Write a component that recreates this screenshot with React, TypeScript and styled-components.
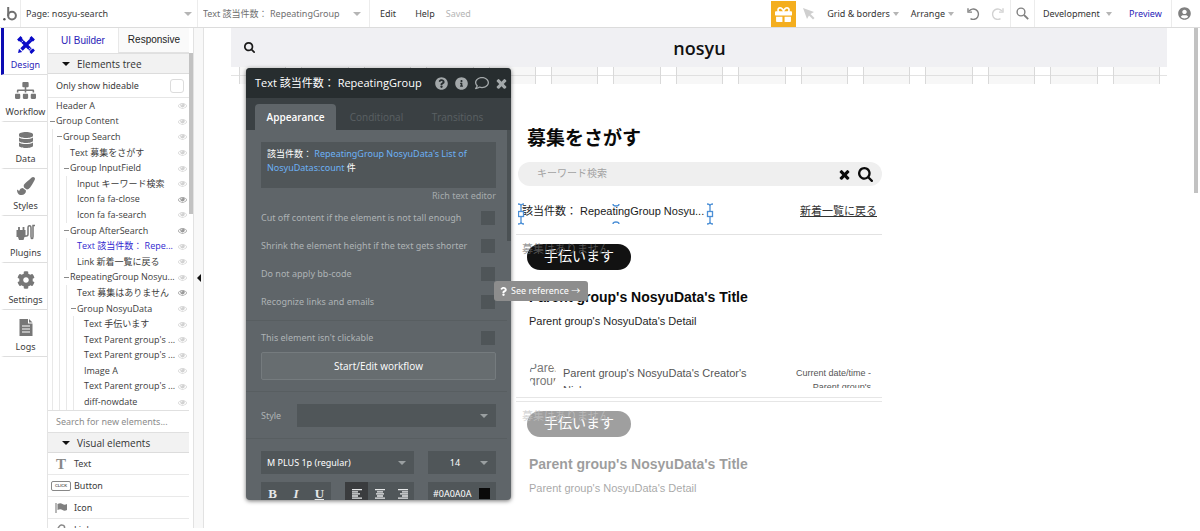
import React from "react";
import styled, { createGlobalStyle, css } from "styled-components";
import {
  FaGift,
  FaSitemap,
  FaDatabase,
  FaPaintBrush,
  FaCog,
  FaQuestionCircle,
  FaInfoCircle,
  FaRegComment,
  FaUserCircle,
  FaQuestion,
} from "react-icons/fa";

const ui = `"Noto Sans", "Open Sans", "Noto Sans CJK JP", sans-serif`;
const tight = `"Open Sans", "Noto Sans CJK JP", sans-serif`;
const arial = `"Liberation Sans", "Noto Sans CJK JP", sans-serif`;

const GlobalStyle = createGlobalStyle`
  *, *::before, *::after { box-sizing: border-box; }
  body { margin: 0; background: #fff; color: #3c3c3c; font: 9px/14px ${ui}; }
  button, input, select { font: inherit; color: inherit; margin: 0; padding: 0; border: 0; background: none; border-radius: 0; }
  button { cursor: pointer; }
  a { color: inherit; text-decoration: none; }
  svg { display: block; flex: none; }
`;

/* ---------- shell ---------- */

const Shell = styled.div`
  display: flex;
  flex-direction: column;
  height: 100vh;
  padding-bottom: 3px;
  overflow: hidden;
`;

const Workspace = styled.div`
  display: flex;
  flex: 1;
  min-height: 0;
`;

/* ---------- top bar ---------- */

const TopBar = styled.header`
  display: flex;
  align-items: stretch;
  height: 28px;
  border-bottom: 1px solid #dcdcdc;
  background: #fff;
`;

const BarCell = styled.div<{ $w?: number; $divided?: boolean }>`
  display: flex;
  align-items: center;
  width: ${(p) => (p.$w ? `${p.$w}px` : "auto")};
  ${(p) => p.$divided && "border-right: 1px solid #ececec;"}
`;

const Menus = styled.div`
  display: flex;
  gap: 7px;
  padding-left: 4px;
`;

const BarButton = styled.button<{ $accent?: boolean }>`
  display: flex;
  align-items: center;
  gap: 3px;
  padding: 0 6px;
  color: ${(p) => (p.$accent ? "#2a23b8" : "#333")};
`;

const VersionButton = styled(BarButton)`
  gap: 6px;
  width: 88px;
  padding: 0 8px;
`;

const IconButton = styled.button<{ $tone?: string }>`
  display: flex;
  align-items: center;
  justify-content: center;
  width: 25px;
  height: 27px;
  color: ${(p) => p.$tone ?? "#808080"};
`;

const GiftButton = styled(IconButton)`
  height: 26px;
  margin-top: 1px;
  background: #f4ae1e;
  color: #fff;
`;

const Saved = styled.span`
  align-self: center;
  padding-left: 5px;
  color: #b4b4b4;
`;

const Spacer = styled.div`
  flex: 1;
`;

const SelectWrap = styled.div<{ $arrow: string; $inset: number }>`
  position: relative;
  display: flex;
  flex: 1;
  align-self: stretch;
  min-width: 0;

  &::after {
    content: "";
    position: absolute;
    top: calc(50% - 2px);
    right: ${(p) => p.$inset}px;
    border: 4px solid transparent;
    border-top-color: ${(p) => p.$arrow};
    border-bottom: 0;
    pointer-events: none;
  }
`;

const BarSelect = styled.select<{ $muted?: boolean }>`
  appearance: none;
  width: 100%;
  padding: 0 16px 0 5px;
  color: ${(p) => (p.$muted ? "#6f6f6f" : "#3a3a3a")};
`;

const Caret = styled.span`
  border: 3px solid transparent;
  border-top: 4px solid #b5b5b5;
  border-bottom: 0;
`;

/* ---------- navigation rail ---------- */

const Rail = styled.nav`
  display: flex;
  flex-direction: column;
  flex: none;
  width: 48px;
  border-right: 1px solid #e4e4e4;
`;

const RailItem = styled.button<{ $active?: boolean }>`
  display: flex;
  flex-direction: column;
  align-items: center;
  justify-content: flex-end;
  gap: 4px;
  height: 47px;
  margin: 0 0 0 1px;
  padding: 0 0 2px;
  border-bottom: 1px solid #dedede;
  border-left: 3px solid ${(p) => (p.$active ? "#0c0cb4" : "transparent")};
  color: ${(p) => (p.$active ? "#2a23b8" : "#3c3c3c")};
  white-space: nowrap;

  svg {
    color: ${(p) => (p.$active ? "#0a0ac8" : "#777")};
  }
`;

/* ---------- side panel ---------- */

const Panel = styled.aside`
  display: flex;
  flex-direction: column;
  flex: none;
  width: 141px;
`;

const Tabs = styled.div`
  display: flex;
  flex: none;
  height: 25px;
`;

const Tab = styled.button<{ $active?: boolean }>`
  flex: 1;
  font: 10px/14px ${arial};
  ${(p) =>
    p.$active
      ? css`
          color: #2a23b8;
        `
      : css`
          border-bottom: 1px solid #e2e2e2;
          border-left: 1px solid #e8e8e8;
          background: #fafafa;
          color: #222;
        `}
`;

const SectionHeader = styled.button`
  display: flex;
  align-items: center;
  flex: none;
  gap: 7px;
  height: 21px;
  padding-left: 14px;
  border-top: 1px solid #e0e0e0;
  border-bottom: 1px solid #dcdcdc;
  background: #f2f2f2;
  font: 10px/14px ${tight};
  color: #333;

  &::before {
    content: "";
    border: 4px solid transparent;
    border-top: 4px solid #111;
    border-bottom: 0;
  }
`;

const HideableRow = styled.label`
  display: flex;
  align-items: center;
  justify-content: space-between;
  flex: none;
  height: 24px;
  padding: 0 5px 0 8px;
  border-bottom: 1px solid #e6e6e6;
`;

const LightCheck = styled.input`
  appearance: none;
  width: 14px;
  height: 14px;
  border: 1px solid #dcdcdc;
  border-radius: 3px;
  background: #fff;
`;

const Tree = styled.ul`
  display: flex;
  flex: 1;
  flex-direction: column;
  min-height: 0;
  margin: 0;
  padding: 0 1px;
  list-style: none;
  font-family: ${tight};
`;

const TreeRow = styled.li<{ $selected?: boolean }>`
  display: flex;
  flex: 1;
  align-items: center;
  min-height: 0;
  color: ${(p) => (p.$selected ? "#3129cf" : "#3c3c3c")};
`;

const Guide = styled.span`
  flex: none;
  align-self: stretch;
  width: 7px;
  background: linear-gradient(#e8e8e8, #e8e8e8) 3px 0 / 1px 100% no-repeat;
`;

const Twist = styled.span<{ $open?: boolean }>`
  flex: none;
  width: 5px;
  height: 1px;
  margin: 0 1px;
  background: ${(p) => (p.$open ? "#8a8a8a" : "transparent")};
`;

const TreeLabel = styled.span`
  flex: 1;
  min-width: 0;
  white-space: nowrap;
`;

const EyeButton = styled.button<{ $on?: boolean }>`
  padding-right: 1px;
  color: ${(p) => (p.$on ? "#9a9a9a" : "#d2d2d2")};
`;

const ElementSearch = styled.input`
  flex: none;
  height: 22px;
  padding-left: 8px;
  border-top: 1px solid #e0e0e0;

  &::placeholder {
    color: #8c8c8c;
    opacity: 1;
  }
`;

const Palette = styled.div`
  flex: none;
  height: 75px;
  overflow: hidden;
`;

const PaletteItem = styled.button`
  display: flex;
  align-items: center;
  gap: 3px;
  width: 100%;
  height: 22px;
  padding-left: 3px;
  border-bottom: 1px solid #e9e9e9;

  > svg,
  > span:first-child {
    width: 20px;
  }
`;

const BigT = styled.span`
  font: bold 15px/16px "Liberation Serif", serif;
  color: #888;
  text-align: center;
`;

const ClickChip = styled.span`
  height: 10px;
  border: 1px solid #888;
  border-radius: 2px;
  font: bold 4px/8px ${arial};
  color: #666;
  text-align: center;
`;

const ScrollTrack = styled.div<{ $top?: number }>`
  flex: none;
  width: 4px;
  padding-top: ${(p) => p.$top ?? 0}px;
`;

const ScrollThumb = styled.div<{ $h: number; $tone?: string }>`
  height: ${(p) => p.$h}px;
  background: ${(p) => p.$tone ?? "#c2c2c2"};
`;

const Gutter = styled.div`
  flex: none;
  width: 2px;
`;

const Collapser = styled.button`
  display: flex;
  align-items: center;
  justify-content: center;
  flex: none;
  width: 11px;
  border-left: 1px solid #e2e2e2;
  border-right: 1px solid #e2e2e2;
  background: #f8f8f8;

  &::before {
    content: "";
    border: 4px solid transparent;
    border-right: 4px solid #111;
    border-left: 0;
  }
`;

/* ---------- canvas ---------- */

const Canvas = styled.main`
  position: relative;
  flex: 1;
  min-width: 0;
  padding: 0 27px;
  overflow: hidden;
  font-family: ${arial};
  color: #1a1a1a;
`;

const SiteHeader = styled.div`
  display: grid;
  grid-template-columns: 1fr auto 1fr;
  align-items: center;
  height: 39px;
  padding: 0 12px 0 13px;
  background: #f0f0f3;
`;

const SiteLogo = styled.div`
  font: 600 18px/22px ${tight};
  color: #111;
`;

const GridStrip = styled.div`
  display: grid;
  grid-template-columns: repeat(15, 1fr);
  gap: 15px;
  height: 17px;
  padding: 0 7px 0 8px;
  background: linear-gradient(#e3e3e3, #e3e3e3) 0 8px / 100% 1px no-repeat;
`;

const GridColumn = styled.div`
  border: solid #d9d9d9;
  border-width: 0 1px;
  background: linear-gradient(#e0e0e0, #e0e0e0) 0 8px / 100% 1px no-repeat #f7f7f7;
`;

const Page = styled.div`
  max-width: 366px;
  margin: 0 auto;
`;

const PageTitle = styled.h1`
  margin: 40px 0 9px 11px;
  font-size: 19px;
  line-height: 29px;
  font-weight: 700;
  color: #0a0a0a;
`;

const SearchBar = styled.div`
  display: flex;
  align-items: center;
  gap: 8px;
  height: 24px;
  margin-left: 2px;
  padding: 0 9px 0 19px;
  border-radius: 12px;
  background: #efefef;
  color: #0a0a0a;

  input {
    flex: 1;
    min-width: 0;
    font-size: 10px;
  }
  input::placeholder {
    color: #a3a3a3;
    opacity: 1;
  }
`;

const ResultRow = styled.div`
  display: flex;
  align-items: center;
  justify-content: space-between;
  height: 49px;
  padding: 2px 5px 0 6px;
  border-bottom: 1px solid #e2e2e2;
  font-size: 11px;
  line-height: 16px;

  a {
    text-decoration: underline;
    color: #333;
  }
`;

const SelectedText = styled.div`
  position: relative;
  width: 190px;
  white-space: nowrap;

  svg {
    position: absolute;
    top: 0;
    left: -4px;
  }
`;

const Card = styled.article<{ $ghost?: boolean }>`
  position: relative;
  padding: 9px 11px 9px;
  opacity: ${(p) => (p.$ghost ? 0.4 : 1)};
`;

const CardSeparator = styled.div`
  height: 5px;
  border: solid #e6e6e6;
  border-width: 1px 0;
`;

const Pill = styled.div`
  width: 104px;
  height: 26px;
  border-radius: 13px;
  background: #121212;
  font-size: 14px;
  line-height: 25px;
  color: #fff;
  text-align: center;
`;

const EmptyNote = styled.div`
  position: absolute;
  top: 6px;
  left: 6px;
  font-size: 11px;
  line-height: 16px;
  color: rgba(110, 110, 110, 0.7);
`;

const CardTitle = styled.h2`
  margin: 18px 0 0 2px;
  font-size: 14px;
  line-height: 18px;
  color: #0a0a0a;
`;

const CardDetail = styled.p`
  margin: 7px 0 33px 2px;
  font-size: 11px;
  line-height: 16px;
  color: #1f1f1f;
`;

const CardFooter = styled.div`
  display: flex;
  height: 26px;
  margin-left: 2px;
  overflow: hidden;
  color: #555;
`;

const Avatar = styled.div`
  width: 27px;
  height: 26px;
  border-radius: 13px;
  overflow: hidden;
  font-size: 12px;
  line-height: 13px;
  color: #777;
`;

const Creator = styled.div`
  width: 190px;
  height: 23px;
  margin: 3px 0 0 7px;
  overflow: hidden;
  font-size: 11px;
  line-height: 17px;
`;

const DateNote = styled.div`
  flex: 1;
  height: 22px;
  margin: 4px 0 0 30px;
  overflow: hidden;
  font-size: 9px;
  line-height: 14px;
  text-align: right;
`;

/* ---------- property editor ---------- */

const Editor = styled.section`
  position: absolute;
  top: 40px;
  left: 42px;
  display: flex;
  flex-direction: column;
  width: 265px;
  height: 432px;
  border-radius: 4px;
  overflow: hidden;
  background: #5f6569;
  box-shadow: 0 1px 4px rgba(0, 0, 0, 0.55);
  font-family: ${ui};
  color: #fff;
`;

const EditorHeader = styled.div`
  display: flex;
  align-items: center;
  flex: none;
  gap: 7px;
  height: 30px;
  padding: 0 4px 0 9px;
  background: #272d2f;

  h3 {
    flex: 1;
    min-width: 0;
    margin: 0;
    font: 11px/16px ${tight};
    white-space: nowrap;
  }
  button {
    color: #a3a8aa;
  }
`;

const EditorTabs = styled.div`
  display: flex;
  align-items: flex-end;
  flex: none;
  height: 32px;
  padding-left: 9px;
  background: #3a4043;
`;

const EditorTab = styled.button<{ $active?: boolean }>`
  width: 81px;
  height: 26px;
  border-radius: 4px 4px 0 0;
  font: 10px/14px ${tight};
  color: #5a6063;
  ${(p) =>
    p.$active &&
    css`
      background: #5f6569;
      font-weight: 600;
      color: #fff;
    `}
`;

const EditorBody = styled.div`
  display: flex;
  flex: 1;
  min-height: 0;
`;

const Fields = styled.div`
  flex: 1;
  min-width: 0;
`;

const FieldGroup = styled.div<{ $compact?: boolean }>`
  padding: ${(p) => (p.$compact ? "10px 11px 11px 15px" : "12px 11px 11px 15px")};
  border-bottom: 1px solid #585e61;
`;

const Expression = styled.div`
  height: 46px;
  padding: 5px 6px;
  background: #505659;
  line-height: 14px;

  span {
    color: #6cb1f5;
  }
`;

const RichLink = styled.a`
  display: block;
  height: 16px;
  margin-bottom: 7px;
  line-height: 15px;
  text-align: right;
  color: #a6abad;
`;

const CheckRow = styled.label`
  display: flex;
  align-items: center;
  justify-content: space-between;
  height: 14px;
  padding-right: 1px;
  color: #aeb3b5;
  white-space: nowrap;

  & + & {
    margin-top: 14px;
  }
`;

const DarkCheck = styled.input`
  appearance: none;
  width: 14px;
  height: 14px;
  background: #4f5558;
`;

const WorkflowButton = styled.button`
  width: 100%;
  height: 28px;
  margin-top: 7px;
  border: 1px solid #757b7e;
  border-radius: 2px;
  background: #676d70;
  font: 10px/14px ${tight};
  color: #fff;
`;

const FieldRow = styled.div`
  display: flex;
  align-items: center;
  height: 23px;
  color: #aeb3b5;

  & + & {
    margin-top: 8px;
  }
`;

const StyleCaption = styled.span`
  width: 36px;
`;

const DarkSelect = styled.select<{ $centered?: boolean }>`
  appearance: none;
  width: 100%;
  padding: 0 ${(p) => (p.$centered ? 20 : 6)}px 0 6px;
  background: #505659;
  color: #fff;
  text-align: ${(p) => (p.$centered ? "center" : "left")};
`;

const Cluster = styled.div<{ $w: number }>`
  display: flex;
  flex: none;
  width: ${(p) => p.$w}px;
  height: 23px;
  margin-right: 14px;
  background: #505659;

  &:last-child {
    flex: 1;
    margin-right: 0;
  }
`;

const FormatButton = styled.button<{ $on?: boolean }>`
  display: flex;
  align-items: center;
  justify-content: center;
  flex: 1;
  background: ${(p) => (p.$on ? "#3a3c3e" : "transparent")};
  font: bold 13px/16px "Liberation Serif", serif;
  color: #e6e8e9;
`;

const ColorField = styled.input`
  width: 46px;
  padding-left: 5px;
  color: #fff;
`;

const Swatch = styled.button`
  width: 11px;
  height: 11px;
  margin: 6px 0 0 5px;
  background: #0a0a0a;
`;

const Reference = styled.a`
  position: absolute;
  top: 253px;
  left: 290px;
  display: flex;
  align-items: center;
  gap: 3px;
  height: 20px;
  padding: 0 8px 0 5px;
  border-radius: 3px;
  background: #8d8d8d;
  font: 9px/14px ${ui};
  color: #fff;
  white-space: nowrap;
`;

/* ---------- icons ---------- */

type IconProps = { size: number };

const CloseIcon = ({ size }: IconProps) => (
  <svg width={size} height={size} viewBox="230 240 1330 1330" fill="currentColor">
    <path d="M1490 1322q0 40-28 68l-136 136q-28 28-68 28t-68-28l-294-294-294 294q-28 28-68 28t-68-28l-136-136q-28-28-28-68t28-68l294-294-294-294q-28-28-28-68t28-68l136-136q28-28 68-28t68 28l294 294 294-294q28-28 68-28t68 28l136 136q28 28 28 68t-28 68l-294 294 294 294q28 28 28 68z" />
  </svg>
);

const SearchIcon = ({ size }: IconProps) => (
  <svg width={size} height={size} viewBox="64 128 1664 1664" fill="currentColor">
    <path d="M1216 832q0-185-131.5-316.5t-316.5-131.5-316.5 131.5-131.5 316.5 131.5 316.5 316.5 131.5 316.5-131.5 131.5-316.5zm512 832q0 52-38 90t-90 38q-54 0-90-38l-343-342q-179 124-399 124-143 0-273.5-55.5t-225-150-150-225-55.5-273.5 55.5-273.5 150-225 225-150 273.5-55.5 273.5 55.5 225 150 150 225 55.5 273.5q0 220-124 399l343 343q37 37 37 90z" />
  </svg>
);

const ThinSearchIcon = () => (
  <svg width="13" height="13" viewBox="0 0 13 13" fill="none" stroke="currentColor">
    <circle cx="5" cy="5" r="3.9" strokeWidth="1.4" />
    <path d="M8 8l4.2 4.2" strokeWidth="1.8" />
  </svg>
);

const EyeIcon = () => (
  <svg width="9" height="9" viewBox="0 0 1792 1792" fill="currentColor">
    <path d="M1664 960q-152-236-381-353 61 104 61 225 0 185-131.5 316.5t-316.5 131.5-316.5-131.5-131.5-316.5q0-121 61-225-229 117-381 353 133 205 333.5 326.5t434.5 121.5 434.5-121.5 333.5-326.5zm-720-384q0-20-14-34t-34-14q-125 0-214.5 89.5t-89.5 214.5q0 20 14 34t34 14 34-14 14-34q0-86 61-147t147-61q20 0 34-14t14-34zm848 384q0 34-20 69-140 230-376.5 368.5t-499.5 138.5-499.5-139-376.5-368q-20-35-20-69t20-69q140-229 376.5-368t499.5-139 499.5 139 376.5 368q20 35 20 69z" />
  </svg>
);

const BrandMark = () => (
  <svg width="20" height="27" viewBox="0 0 20 27" fill="none">
    <circle cx="4.4" cy="19.2" r="1.2" fill="#555" />
    <circle cx="12" cy="15.6" r="3.9" stroke="#707070" strokeWidth="2" />
    <path d="M8.2 7v9" stroke="#707070" strokeWidth="2" />
  </svg>
);

const TurnIcon = ({ flip }: { flip?: boolean }) => (
  <svg width="14" height="14" viewBox="0 0 14 14" fill="none" stroke="currentColor" strokeWidth="1.4">
    <g transform={flip ? "matrix(-1 0 0 1 14 0)" : undefined}>
      <path d="M4.5 11.6A5.2 5.2 0 1 0 3 4.2" />
      <path d="M2 1.2v3.9h4" />
    </g>
  </svg>
);

const DesignIcon = () => (
  <svg width="18" height="18" viewBox="0 0 18 18" fill="none" stroke="currentColor">
    <path d="M4.5 4.5L13.5 13.5" strokeWidth="3.4" />
    <path d="M13.5 4.5L4.5 13.5" strokeWidth="3.4" />
    <path d="M1 4.5L4.5 1M13.5 1L17 4.5M13.5 17L17 13.5" strokeWidth="2.6" />
    <path d="M2.6 2.6l2 2M15.4 2.6l-2 2M14 14l1.6 1.6" strokeWidth="3.8" />
    <path d="M1 17l1-4.2L5.2 16z" fill="currentColor" stroke="none" />
    <path d="M6.3 4.6l-2 2M13.6 11.6l-2 2" strokeWidth="0.8" stroke="#fff" />
  </svg>
);

const PlugIcon = () => (
  <svg width="19" height="18" viewBox="0 0 19 18" fill="none" stroke="currentColor">
    <path d="M0.5 6h9v7H8.5L7.5 16H3L2 13H0.500z" fill="currentColor" stroke="none" />
    <path d="M3 3v4M7.5 3v4" strokeWidth="1.8" />
    <path d="M9 12h1.5q1.500 0 1.500-2V4q0-2.200 1.500-2.200T15 4v8.500q0 2 1 2t1-2V1.500h2" strokeWidth="1.5" />
  </svg>
);

const LogIcon = () => (
  <svg width="14" height="17" viewBox="0 0 14 17">
    <path d="M0.5 0h8.500v4.500h4.500V17H0.500z" fill="currentColor" />
    <path d="M10 0l3.500 3.500H10z" fill="currentColor" />
    <path d="M3 7h8M3 10h8M3 13h8" stroke="#fff" strokeWidth="1.2" />
  </svg>
);

const FlagIcon = () => (
  <svg width="20" height="10" viewBox="0 0 20 10">
    <path d="M5 0v10" stroke="#888" strokeWidth="1.2" />
    <path d="M6.5 1q3-1.500 5 0t4.500 0v6q-2.500 1.500-4.500 0t-5 0z" fill="#808080" />
  </svg>
);

const LinkIcon = () => (
  <svg width="20" height="14" viewBox="0 0 20 14" fill="none" stroke="#888" strokeWidth="1.5">
    <path d="M8 8l-1.500-1.500q2-5 4.500-4.500 3 .5 2.500 3L11 9" />
  </svg>
);

const alignOffsets = { left: [0, 0], center: [1, 2], right: [2, 4] };

const AlignIcon = ({ side }: { side: keyof typeof alignOffsets }) => {
  const [mid, short] = alignOffsets[side];
  return (
    <svg width="10" height="10" viewBox="0 0 10 10" stroke="#e6e8e9" strokeWidth="1.3">
      <path d={`M0 .7h10M${short} 2.8h6M${mid} 4.9h8M${short} 7h6M0 9.100h10`} />
    </svg>
  );
};

const Handles = () => (
  <svg width="196" height="22" viewBox="0 0 196 22" fill="none" stroke="#4b8fd6" strokeWidth="1.3">
    {[3, 192].map((x) => (
      <g key={x}>
        <path d={`M${x - 3} 1q3 0 3 2q0-2 3-2M${x} 2v18M${x - 3} 21q3 0 3-2q0 2 3 2`} />
        <rect x={x - 2.5} y="8.5" width="5" height="5" fill="#fff" />
      </g>
    ))}
    <path d="M95 1q0 2 3 2t3-2M95 21q0-2 3-2t3 2" />
  </svg>
);

/* ---------- data ---------- */

const rail: [string, React.ReactNode][] = [
  ["Design", <DesignIcon />],
  ["Workflow", <FaSitemap size={21} />],
  ["Data", <FaDatabase size={16} />],
  ["Styles", <FaPaintBrush size={18} />],
  ["Plugins", <PlugIcon />],
  ["Settings", <FaCog size={18} />],
  ["Logs", <LogIcon />],
];

type TreeNode = { label: string; level: number; open?: boolean; on?: boolean; selected?: boolean };

const tree: TreeNode[] = [
  { label: "Header A", level: 0 },
  { label: "Group Content", level: 0, open: true },
  { label: "Group Search", level: 1, open: true },
  { label: "Text 募集をさがす", level: 2 },
  { label: "Group InputField", level: 2, open: true },
  { label: "Input キーワード検索", level: 3 },
  { label: "Icon fa fa-close", level: 3, on: true },
  { label: "Icon fa fa-search", level: 3 },
  { label: "Group AfterSearch", level: 2, open: true, on: true },
  { label: "Text 該当件数： Repe...", level: 3, selected: true },
  { label: "Link 新着一覧に戻る", level: 3 },
  { label: "RepeatingGroup Nosyu...", level: 2, open: true },
  { label: "Text 募集はありません", level: 3, on: true },
  { label: "Group NosyuData", level: 3, open: true },
  { label: "Text 手伝います", level: 4 },
  { label: "Text Parent group's ...", level: 4 },
  { label: "Text Parent group's ...", level: 4 },
  { label: "Image A", level: 4 },
  { label: "Text Parent group's ...", level: 4 },
  { label: "diff-nowdate", level: 4 },
];

/* ---------- parts ---------- */

const Check = ({ label }: { label: string }) => (
  <CheckRow>
    {label}
    <DarkCheck type="checkbox" />
  </CheckRow>
);

const ResultCard = ({ ghost }: { ghost?: boolean }) => (
  <Card $ghost={ghost}>
    <Pill>手伝います</Pill>
    <EmptyNote>募集はありません</EmptyNote>
    <CardTitle>Parent group's NosyuData's Title</CardTitle>
    <CardDetail>Parent group's NosyuData's Detail</CardDetail>
    {!ghost && (
      <CardFooter>
        <Avatar>Parent group's</Avatar>
        <Creator>Parent group's NosyuData's Creator's Nick</Creator>
        <DateNote>
          Current date/time -<br />
          Parent group's
        </DateNote>
      </CardFooter>
    )}
  </Card>
);

const PropertyEditor = () => (
  <Editor>
    <EditorHeader>
      <h3>Text 該当件数： RepeatingGroup</h3>
      <button aria-label="Help"><FaQuestionCircle size={13} /></button>
      <button aria-label="Info"><FaInfoCircle size={13} /></button>
      <button aria-label="Comment"><FaRegComment size={14} /></button>
      <button aria-label="Close"><CloseIcon size={11} /></button>
    </EditorHeader>
    <EditorTabs>
      <EditorTab $active>Appearance</EditorTab>
      <EditorTab>Conditional</EditorTab>
      <EditorTab>Transitions</EditorTab>
    </EditorTabs>
    <EditorBody>
      <Fields>
        <FieldGroup>
          <Expression>
            該当件数： <span>RepeatingGroup NosyuData's List of NosyuDatas:count</span> 件
          </Expression>
          <RichLink href="#rich">Rich text editor</RichLink>
          <Check label="Cut off content if the element is not tall enough" />
          <Check label="Shrink the element height if the text gets shorter" />
          <Check label="Do not apply bb-code" />
          <Check label="Recognize links and emails" />
        </FieldGroup>
        <FieldGroup $compact>
          <Check label="This element isn't clickable" />
          <WorkflowButton>Start/Edit workflow</WorkflowButton>
        </FieldGroup>
        <FieldGroup>
          <FieldRow>
            <StyleCaption>Style</StyleCaption>
            <SelectWrap $arrow="#9a9fa1" $inset={8}>
              <DarkSelect aria-label="Style" />
            </SelectWrap>
          </FieldRow>
        </FieldGroup>
        <FieldGroup>
          <FieldRow>
            <Cluster $w={153}>
              <SelectWrap $arrow="#9a9fa1" $inset={8}>
                <DarkSelect aria-label="Font">
                  <option>M PLUS 1p (regular)</option>
                </DarkSelect>
              </SelectWrap>
            </Cluster>
            <Cluster $w={67}>
              <SelectWrap $arrow="#9a9fa1" $inset={8}>
                <DarkSelect aria-label="Font size" $centered>
                  <option>14</option>
                </DarkSelect>
              </SelectWrap>
            </Cluster>
          </FieldRow>
          <FieldRow>
            <Cluster $w={70}>
              <FormatButton>B</FormatButton>
              <FormatButton><i>I</i></FormatButton>
              <FormatButton><u>U</u></FormatButton>
            </Cluster>
            <Cluster $w={69}>
              <FormatButton $on aria-label="Align left"><AlignIcon side="left" /></FormatButton>
              <FormatButton aria-label="Align center"><AlignIcon side="center" /></FormatButton>
              <FormatButton aria-label="Align right"><AlignIcon side="right" /></FormatButton>
            </Cluster>
            <Cluster $w={67}>
              <ColorField aria-label="Color" defaultValue="#0A0A0A" />
              <Swatch aria-label="Pick color" />
            </Cluster>
          </FieldRow>
        </FieldGroup>
      </Fields>
      <ScrollTrack>
        <ScrollThumb $h={111} $tone="#4b5154" />
      </ScrollTrack>
    </EditorBody>
  </Editor>
);

export default function App() {
  return (
    <Shell>
      <GlobalStyle />
      <TopBar>
        <BarCell $w={21} $divided><BrandMark /></BarCell>
        <BarCell $w={177} $divided>
          <SelectWrap $arrow="#b5b5b5" $inset={5}>
            <BarSelect aria-label="Page"><option>Page: nosyu-search</option></BarSelect>
          </SelectWrap>
        </BarCell>
        <BarCell $w={172} $divided>
          <SelectWrap $arrow="#b5b5b5" $inset={8}>
            <BarSelect aria-label="Element" $muted><option>Text 該当件数： RepeatingGroup</option></BarSelect>
          </SelectWrap>
        </BarCell>
        <Menus>
          <BarButton>Edit</BarButton>
          <BarButton>Help</BarButton>
        </Menus>
        <Saved>Saved</Saved>
        <Spacer />
        <GiftButton aria-label="Gift"><FaGift size={17} /></GiftButton>
        <IconButton $tone="#cfcfcf" aria-label="Pointer">
          <svg width="12" height="12" viewBox="0 0 12 12" fill="currentColor">
            <path d="M0 0l11 4-3.5 2 4 4L10 11.5l-4-4L4 11z" />
          </svg>
        </IconButton>
        <BarButton>Grid &amp; borders <Caret /></BarButton>
        <BarButton>Arrange <Caret /></BarButton>
        <BarCell $w={51} $divided>
          <IconButton aria-label="Undo"><TurnIcon /></IconButton>
          <IconButton $tone="#d2d2d2" aria-label="Redo"><TurnIcon flip /></IconButton>
        </BarCell>
        <BarCell $w={24} $divided>
          <IconButton aria-label="Search"><ThinSearchIcon /></IconButton>
        </BarCell>
        <VersionButton>Development <Caret /></VersionButton>
        <BarCell $w={49} $divided><BarButton $accent>Preview</BarButton></BarCell>
        <BarCell $w={28}>
          <IconButton aria-label="Account"><FaUserCircle size={13} /></IconButton>
        </BarCell>
      </TopBar>
      <Workspace>
        <Rail>
          {rail.map(([label, icon], i) => (
            <RailItem key={label} $active={i === 0}>
              {icon}
              {label}
            </RailItem>
          ))}
        </Rail>
        <Panel>
          <Tabs>
            <Tab $active>UI Builder</Tab>
            <Tab>Responsive</Tab>
          </Tabs>
          <SectionHeader>Elements tree</SectionHeader>
          <HideableRow>
            Only show hideable
            <LightCheck type="checkbox" />
          </HideableRow>
          <Tree>
            {tree.map((node, i) => (
              <TreeRow key={i} $selected={node.selected}>
                {Array.from({ length: node.level }, (_, g) => <Guide key={g} />)}
                <Twist $open={node.open} />
                <TreeLabel>{node.label}</TreeLabel>
                <EyeButton $on={node.on} aria-label="Toggle visibility"><EyeIcon /></EyeButton>
              </TreeRow>
            ))}
          </Tree>
          <ElementSearch aria-label="Search for new elements" placeholder="Search for new elements..." />
          <SectionHeader>Visual elements</SectionHeader>
          <Palette>
            <PaletteItem><BigT>T</BigT>Text</PaletteItem>
            <PaletteItem><ClickChip>CLICK</ClickChip>Button</PaletteItem>
            <PaletteItem><FlagIcon />Icon</PaletteItem>
            <PaletteItem><LinkIcon />Link</PaletteItem>
          </Palette>
        </Panel>
        <ScrollTrack $top={25}>
          <ScrollThumb $h={161} />
        </ScrollTrack>
        <Collapser aria-label="Collapse panel" />
        <Canvas>
          <SiteHeader>
            <SearchIcon size={11} />
            <SiteLogo>nosyu</SiteLogo>
          </SiteHeader>
          <GridStrip>
            {Array.from({ length: 15 }, (_, i) => <GridColumn key={i} />)}
          </GridStrip>
          <Page>
            <PageTitle>募集をさがす</PageTitle>
            <SearchBar>
              <input aria-label="キーワード検索" placeholder="キーワード検索" />
              <CloseIcon size={11} />
              <SearchIcon size={15} />
            </SearchBar>
            <ResultRow>
              <SelectedText>
                該当件数： RepeatingGroup Nosyu...
                <Handles />
              </SelectedText>
              <a href="#latest">新着一覧に戻る</a>
            </ResultRow>
            <ResultCard />
            <CardSeparator />
            <ResultCard ghost />
          </Page>
          <PropertyEditor />
          <Reference href="#reference">
            <FaQuestion size={9} />
            See reference →
          </Reference>
        </Canvas>
        <ScrollTrack>
          <ScrollThumb $h={165} />
        </ScrollTrack>
        <Gutter />
      </Workspace>
    </Shell>
  );
}
